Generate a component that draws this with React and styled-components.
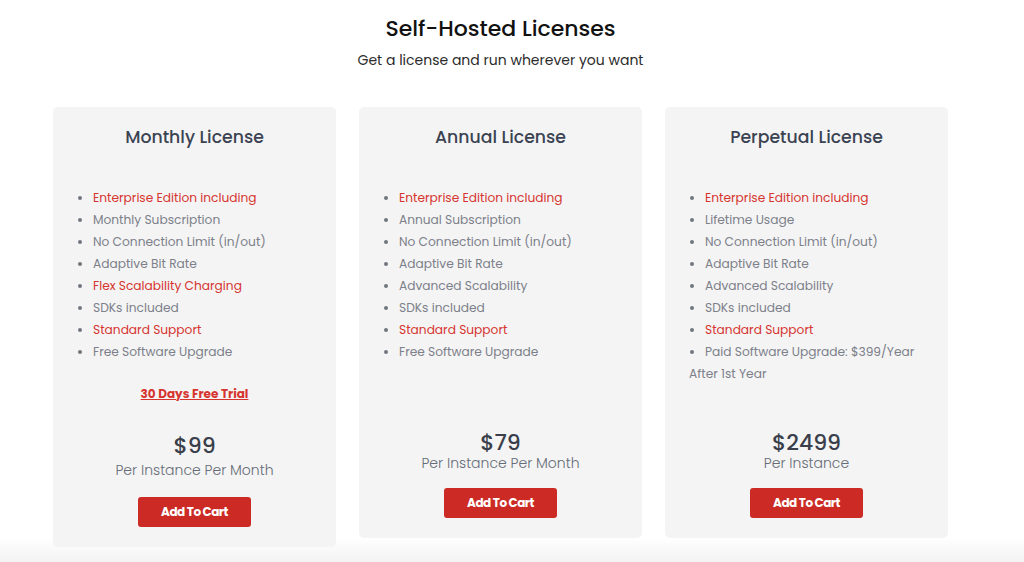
import React from 'react';
import styled, { createGlobalStyle } from 'styled-components';

const GlobalStyle = createGlobalStyle`
  html, body {
    margin: 0;
    padding: 0;
  }
  body {
    min-height: 562px;
    background: linear-gradient(to bottom, #ffffff 0, #ffffff 537px, #f3f3f3 562px);
    font-family: "Poppins", "Open Sans", "Noto Sans", sans-serif;
  }
`;

const Wrapper = styled.div`
  width: 1001px;
  padding-top: 14px;
`;

const Heading = styled.h1`
  margin: 0;
  text-align: center;
  font-size: 22px;
  line-height: 30px;
  font-weight: 500;
  color: #111111;
`;

const Subtitle = styled.p`
  margin: 6px 0 0;
  text-align: center;
  font-size: 14px;
  line-height: 20px;
  color: #2b2b2b;
`;

const Cards = styled.div`
  width: 895px;
  margin: 37px auto 0;
  display: flex;
  align-items: flex-start;
  gap: 23px;
`;

const Card = styled.div`
  flex: 1;
  box-sizing: border-box;
  background: #f4f4f4;
  border-radius: 5px;
  padding: 17px 24px 20px;
  display: flex;
  flex-direction: column;
`;

const Title = styled.h2`
  margin: 0;
  text-align: center;
  font-size: 17.3px;
  line-height: 26px;
  font-weight: 500;
  color: #3b4352;
`;

const Features = styled.div`
  margin-top: 37px;
  min-height: 215px;
`;

const List = styled.ul`
  margin: 0;
  padding-left: 16px;
  list-style: disc;
`;

const Item = styled.li`
  font-size: 12.2px;
  line-height: 22px;
  color: ${p => (p.hot ? '#d6352f' : '#7c808a')};
  &::marker {
    color: #71757e;
  }
`;

const Note = styled.div`
  font-size: 12.2px;
  line-height: 22px;
  color: #7c808a;
`;

const Trial = styled.a`
  display: block;
  margin-top: 21px;
  text-align: center;
  font-size: 12px;
  line-height: 20px;
  font-weight: 700;
  color: #d6352f;
  text-decoration: underline;
`;

const Price = styled.div`
  margin-top: ${p => (p.roomy ? '28px' : '29px')};
  text-align: center;
  font-size: 22px;
  line-height: ${p => (p.roomy ? '28px' : '24px')};
  font-weight: 500;
  color: #3a3f4b;
`;

const Per = styled.div`
  text-align: center;
  font-size: 14px;
  line-height: ${p => (p.roomy ? '20px' : '16px')};
  font-weight: 300;
  color: #666c77;
`;

const CartButton = styled.button`
  align-self: center;
  margin-top: 17px;
  width: 113px;
  height: 30px;
  border: none;
  border-radius: 3px;
  background: #cc2b25;
  color: #ffffff;
  font-family: inherit;
  font-size: 12px;
  letter-spacing: -0.5px;
  font-weight: 700;
  cursor: pointer;
`;

const licenses = [
  {
    name: 'Monthly License',
    features: [
      ['Enterprise Edition including', true],
      ['Monthly Subscription'],
      ['No Connection Limit (in/out)'],
      ['Adaptive Bit Rate'],
      ['Flex Scalability Charging', true],
      ['SDKs included'],
      ['Standard Support', true],
      ['Free Software Upgrade'],
    ],
    trial: '30 Days Free Trial',
    price: '$99',
    per: 'Per Instance Per Month',
    roomy: true,
  },
  {
    name: 'Annual License',
    features: [
      ['Enterprise Edition including', true],
      ['Annual Subscription'],
      ['No Connection Limit (in/out)'],
      ['Adaptive Bit Rate'],
      ['Advanced Scalability'],
      ['SDKs included'],
      ['Standard Support', true],
      ['Free Software Upgrade'],
    ],
    price: '$79',
    per: 'Per Instance Per Month',
  },
  {
    name: 'Perpetual License',
    features: [
      ['Enterprise Edition including', true],
      ['Lifetime Usage'],
      ['No Connection Limit (in/out)'],
      ['Adaptive Bit Rate'],
      ['Advanced Scalability'],
      ['SDKs included'],
      ['Standard Support', true],
      ['Paid Software Upgrade: $399/Year'],
    ],
    note: 'After 1st Year',
    price: '$2499',
    per: 'Per Instance',
  },
];

export default function App() {
  return (
    <Wrapper>
      <GlobalStyle />
      <Heading>Self-Hosted Licenses</Heading>
      <Subtitle>Get a license and run wherever you want</Subtitle>
      <Cards>
        {licenses.map(lic => (
          <Card key={lic.name}>
            <Title>{lic.name}</Title>
            <Features>
              <List>
                {lic.features.map(([text, hot]) => (
                  <Item key={text} hot={hot}>{text}</Item>
                ))}
              </List>
              {lic.note && <Note>{lic.note}</Note>}
              {lic.trial && <Trial href="#">{lic.trial}</Trial>}
            </Features>
            <Price roomy={lic.roomy}>{lic.price}</Price>
            <Per roomy={lic.roomy}>{lic.per}</Per>
            <CartButton>Add To Cart</CartButton>
          </Card>
        ))}
      </Cards>
    </Wrapper>
  );
}
